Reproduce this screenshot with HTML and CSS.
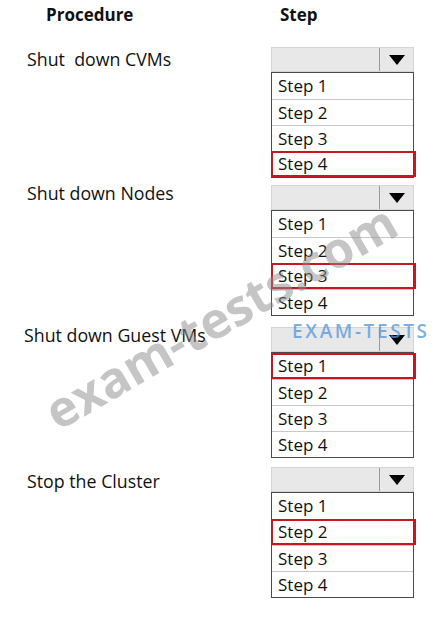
FILE: index.html
```html
<!DOCTYPE html>
<html lang="en">
<head>
    <meta charset="UTF-8">
    <meta name="viewport" content="width=device-width, initial-scale=1.0">
    <title>Shutdown Order</title>
    <link rel="stylesheet" href="styles.css">
</head>
<body>

<div class="sheet">
    <div class="head">
        <span class="head-proc">Procedure</span>
        <span class="head-step">Step</span>
    </div>

    <div class="task task-1">
        <div class="task-name">Shut&nbsp; down CVMs</div>
        <div class="picker">
            <div class="picker-bar">
                <span class="picker-btn"><svg width="16" height="10" viewBox="0 0 16 10"><path d="M0 0H16L8 10Z" fill="#000"/></svg></span>
            </div>
            <ul class="picker-list">
                <li>Step 1</li>
                <li>Step 2</li>
                <li>Step 3</li>
                <li class="picked">Step 4</li>
            </ul>
        </div>
    </div>

    <div class="task task-2">
        <div class="task-name">Shut down Nodes</div>
        <div class="picker">
            <div class="picker-bar">
                <span class="picker-btn"><svg width="16" height="10" viewBox="0 0 16 10"><path d="M0 0H16L8 10Z" fill="#000"/></svg></span>
            </div>
            <ul class="picker-list">
                <li>Step 1</li>
                <li>Step 2</li>
                <li class="picked">Step 3</li>
                <li>Step 4</li>
            </ul>
        </div>
    </div>

    <div class="task task-3">
        <div class="task-name">Shut down Guest VMs</div>
        <div class="picker">
            <div class="picker-bar">
                <span class="picker-btn"><svg width="16" height="10" viewBox="0 0 16 10"><path d="M0 0H16L8 10Z" fill="#000"/></svg></span>
            </div>
            <ul class="picker-list">
                <li class="picked">Step 1</li>
                <li>Step 2</li>
                <li>Step 3</li>
                <li>Step 4</li>
            </ul>
        </div>
    </div>

    <div class="task task-4">
        <div class="task-name">Stop the Cluster</div>
        <div class="picker">
            <div class="picker-bar">
                <span class="picker-btn"><svg width="16" height="10" viewBox="0 0 16 10"><path d="M0 0H16L8 10Z" fill="#000"/></svg></span>
            </div>
            <ul class="picker-list">
                <li>Step 1</li>
                <li class="picked">Step 2</li>
                <li>Step 3</li>
                <li>Step 4</li>
            </ul>
        </div>
    </div>

    <!-- watermarks over the sheet -->
    <div class="mark-site">exam-tests.com</div>
    <div class="mark-logo">EXAM-TESTS</div>
</div>

</body>
</html>
```

FILE: styles.css
```css
body {
    margin: 0;
    background: #fff;
    font-family: "Open Sans", "Noto Sans", sans-serif;
    color: #111;
}

.sheet {
    position: relative;
    width: 436px;
    height: 620px;
    overflow: hidden;
}

.head {
    display: flex;
    padding-top: 2px;
    font-weight: bold;
    font-size: 17px;
    line-height: 25px;
}

.head-proc {
    margin-left: 46px;
    width: 234px;
}

.task {
    display: flex;
    justify-content: space-between;
    align-items: flex-start;
    padding-right: 22px;
}

.task-1 { margin-top: 20px; }
.task-2 { margin-top: 7px; }
.task-3 { margin-top: 11px; }
.task-4 { margin-top: 9px; }

.task-name {
    margin-left: 27px;
    font-size: 17.8px;
    line-height: 25px;
}

.task-2 .task-name { margin-top: -4px; }
.task-3 .task-name { margin-left: 24px; margin-top: -4px; }
.task-4 .task-name { margin-top: 2px; }

.picker {
    width: 143px;
}

.picker-bar {
    display: flex;
    justify-content: flex-end;
    height: 25px;
    box-sizing: border-box;
    background: #e8e8e8;
    border: 1px solid #d4d4d4;
}

.picker-btn {
    display: flex;
    align-items: center;
    justify-content: center;
    width: 33px;
    border-left: 1px solid #9a9a9a;
}

.picker-list {
    list-style: none;
    margin: 0;
    padding: 0;
    border: 1px solid #4a4a4a;
    background: #fff;
}

.picker-list li {
    height: 26px;
    box-sizing: border-box;
    padding-left: 6px;
    font-size: 17px;
    line-height: 25px;
    border-top: 1px solid #c8c8c8;
}

.picker-list li:first-child {
    border-top: none;
}

.picker-list li.picked {
    position: relative;
    margin: 0 -3px 0 -1px;
    padding-left: 5px;
    border: 2px solid #c8161d;
    line-height: 21px;
}

.mark-site {
    position: absolute;
    left: 22px;
    top: 282px;
    font-size: 50px;
    font-weight: bold;
    color: rgba(140, 140, 140, 0.5);
    transform: rotate(-30deg);
    white-space: nowrap;
}

.mark-logo {
    position: absolute;
    left: 292px;
    top: 318px;
    font-size: 19px;
    font-weight: 600;
    letter-spacing: 2.6px;
    color: rgba(80, 150, 220, 0.75);
}
```
